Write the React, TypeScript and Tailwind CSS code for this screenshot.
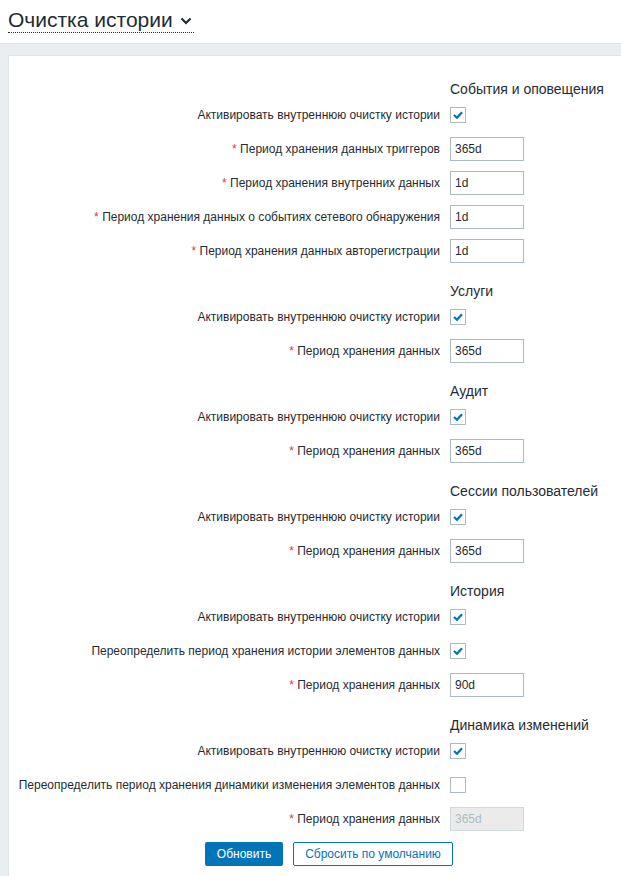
import React from "react";

type Row =
  | { kind: "check"; label: string; checked: boolean }
  | { kind: "input"; label: string; value: string; disabled?: boolean };

type Section = { title: string; rows: Row[] };

const ACTIVATE = "Активировать внутреннюю очистку истории";
const PERIOD = "Период хранения данных";

const sections: Section[] = [
  {
    title: "События и оповещения",
    rows: [
      { kind: "check", label: ACTIVATE, checked: true },
      { kind: "input", label: "Период хранения данных триггеров", value: "365d" },
      { kind: "input", label: "Период хранения внутренних данных", value: "1d" },
      {
        kind: "input",
        label: "Период хранения данных о событиях сетевого обнаружения",
        value: "1d",
      },
      { kind: "input", label: "Период хранения данных авторегистрации", value: "1d" },
    ],
  },
  {
    title: "Услуги",
    rows: [
      { kind: "check", label: ACTIVATE, checked: true },
      { kind: "input", label: PERIOD, value: "365d" },
    ],
  },
  {
    title: "Аудит",
    rows: [
      { kind: "check", label: ACTIVATE, checked: true },
      { kind: "input", label: PERIOD, value: "365d" },
    ],
  },
  {
    title: "Сессии пользователей",
    rows: [
      { kind: "check", label: ACTIVATE, checked: true },
      { kind: "input", label: PERIOD, value: "365d" },
    ],
  },
  {
    title: "История",
    rows: [
      { kind: "check", label: ACTIVATE, checked: true },
      {
        kind: "check",
        label: "Переопределить период хранения истории элементов данных",
        checked: true,
      },
      { kind: "input", label: PERIOD, value: "90d" },
    ],
  },
  {
    title: "Динамика изменений",
    rows: [
      { kind: "check", label: ACTIVATE, checked: true },
      {
        kind: "check",
        label: "Переопределить период хранения динамики изменения элементов данных",
        checked: false,
      },
      { kind: "input", label: PERIOD, value: "365d", disabled: true },
    ],
  },
];

function Checkbox({ checked }: { checked: boolean }) {
  return (
    <span className="flex h-[16px] w-[16px] items-center justify-center border border-[#acbbc2] bg-white">
      {checked && (
        <svg width="10" height="8" viewBox="0 0 10 8">
          <polyline
            points="1,4 4,6.8 9,1.2"
            fill="none"
            stroke="#0275b8"
            strokeWidth="2.2"
          />
        </svg>
      )}
    </span>
  );
}

function FormRow({ row }: { row: Row }) {
  return (
    <div className="grid h-[24px] grid-cols-[431px_1fr] items-center gap-x-[10px]">
      <label className="truncate text-right text-[12px] leading-[24px] text-[#1f2c33]">
        {row.kind === "input" && <span className="text-[#e33734]">* </span>}
        {row.label}
      </label>
      <div className="flex items-center">
        {row.kind === "check" ? (
          <Checkbox checked={row.checked} />
        ) : (
          <div
            className={
              row.disabled
                ? "h-[24px] w-[74px] border border-[#d1d9dd] bg-[#ebebeb] pl-[4px] text-[12px] leading-[22px] text-[#acbbc2]"
                : "h-[24px] w-[74px] border border-[#acbbc2] bg-white pl-[4px] text-[12px] leading-[22px] text-[#1f2c33]"
            }
          >
            {row.value}
          </div>
        )}
      </div>
    </div>
  );
}

export default function App() {
  return (
    <div
      className="min-h-[876px] bg-[#ebeef0] text-[#1f2c33]"
      style={{ fontFamily: '"Liberation Sans", Arial, sans-serif' }}
    >
      <header className="h-[44px] border-b border-[#dfe4e7] bg-white px-[8px] pt-[8px]">
        <button className="flex h-[25px] items-center gap-[7px] border-b border-dotted border-[#1f2c33] text-[21px] leading-[24px]">
          <span>Очистка истории</span>
          <svg width="12" height="8" viewBox="0 0 12 8" className="mt-[2px] mr-[2px]">
            <polyline
              points="1.5,1.5 6,6 10.5,1.5"
              fill="none"
              stroke="#1f2c33"
              strokeWidth="2.2"
            />
          </svg>
        </button>
      </header>
      <div className="pl-[8px] pt-[11px]">
        <main className="min-h-[821px] border-l border-t border-[#dfe4e7] bg-white pt-[25px]">
          <div className="flex flex-col gap-[20px]">
            {sections.map((s) => (
              <section key={s.title} className="flex flex-col gap-[10px]">
                <div className="-mb-[4px] grid h-[16px] grid-cols-[431px_1fr] gap-x-[10px]">
                  <div />
                  <h3 className="text-[14px] leading-[16px]">{s.title}</h3>
                </div>
                {s.rows.map((r, i) => (
                  <FormRow key={i} row={r} />
                ))}
              </section>
            ))}
          </div>
          <div className="mt-[11px] flex gap-[10px] pl-[196px]">
            <button className="h-[24px] w-[78px] rounded-[2px] bg-[#0275b8] text-[12px] text-white">
              Обновить
            </button>
            <button className="h-[24px] w-[160px] rounded-[2px] border border-[#0275b8] bg-white text-[12px] text-[#0275b8]">
              Сбросить по умолчанию
            </button>
          </div>
        </main>
      </div>
    </div>
  );
}
